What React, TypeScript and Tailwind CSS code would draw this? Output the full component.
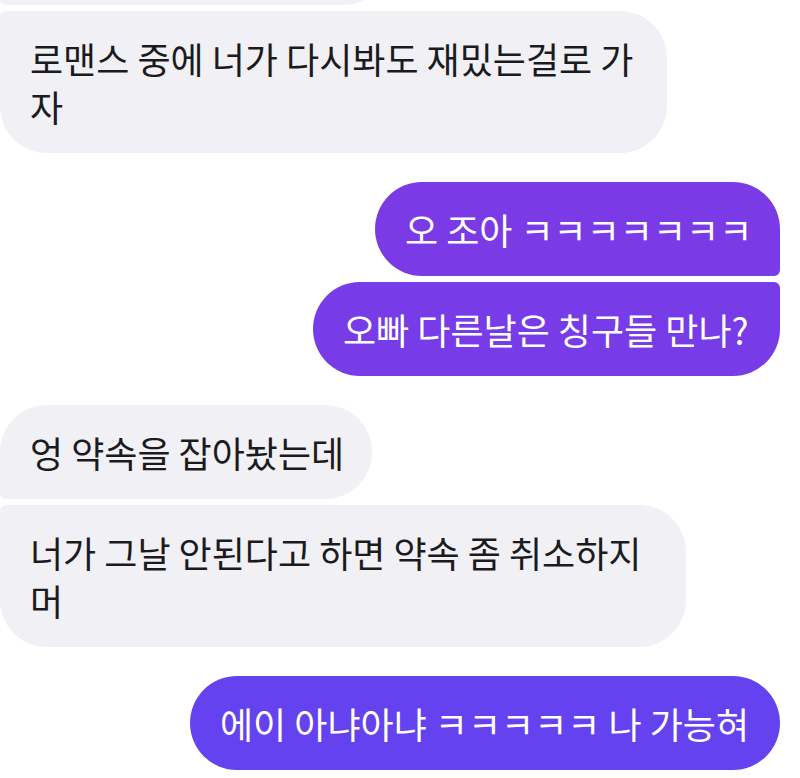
import React from "react";

type Msg = {
    text: React.ReactNode;
    mine: boolean;
    width: string;
    shape: string;
    color?: string;
};

const messages: Msg[] = [
    {
        text: (
            <>
                로맨스 중에 너가 다시봐도 재밌는걸로 가
                <br />자
            </>
        ),
        mine: false,
        width: "w-[667px]",
        shape: "rounded-tl-[6px] rounded-bl-[47px] rounded-r-[47px] mt-[6px]",
    },
    {
        text: "오 조아 ㅋㅋㅋㅋㅋㅋㅋ",
        mine: true,
        width: "w-[405px]",
        shape: "rounded-l-[47px] rounded-tr-[47px] rounded-br-[6px] mt-[29px]",
        color: "bg-[#7a3ae5]",
    },
    {
        text: "오빠 다른날은 칭구들 만나?",
        mine: true,
        width: "w-[467px]",
        shape: "rounded-l-[47px] rounded-tr-[6px] rounded-br-[47px] mt-[6px]",
        color: "bg-[#773ce7]",
    },
    {
        text: "엉 약속을 잡아놨는데",
        mine: false,
        width: "w-[372px]",
        shape: "rounded-tl-[47px] rounded-bl-[6px] rounded-r-[47px] mt-[29px]",
    },
    {
        text: (
            <>
                너가 그날 안된다고 하면 약속 좀 취소하지
                <br />머
            </>
        ),
        mine: false,
        width: "w-[686px]",
        shape: "rounded-tl-[6px] rounded-bl-[47px] rounded-r-[47px] mt-[6px]",
    },
    {
        text: "에이 아냐아냐 ㅋㅋㅋㅋㅋ 나 가능혀",
        mine: true,
        width: "w-[590px]",
        shape: "rounded-[47px] mt-[29px]",
        color: "bg-[#6542ef]",
    },
];

const Bubble = ({ msg }: { msg: Msg }) => {
    const side = msg.mine
        ? `self-end mr-[20px] text-white ${msg.color}`
        : "self-start bg-[#f0f0f5] text-[#1b1b1d]";
    return (
        <div
            className={`${side} ${msg.width} ${msg.shape} pl-[30px] pr-[10px] py-[23px] text-[36px] leading-[48px] whitespace-nowrap`}
        >
            {msg.text}
        </div>
    );
};

export default function App() {
    return (
        <div
            className="w-[800px] h-[778px] overflow-hidden bg-white flex flex-col"
            style={{ fontFamily: '"Noto Sans CJK KR", "Noto Sans", sans-serif' }}
        >
            <div className="self-start w-[390px] h-[94px] -mt-[89px] shrink-0 bg-[#f0f0f5] rounded-tl-[47px] rounded-bl-[6px] rounded-r-[47px]" />
            {messages.map((m, i) => (
                <Bubble key={i} msg={m} />
            ))}
        </div>
    );
}
